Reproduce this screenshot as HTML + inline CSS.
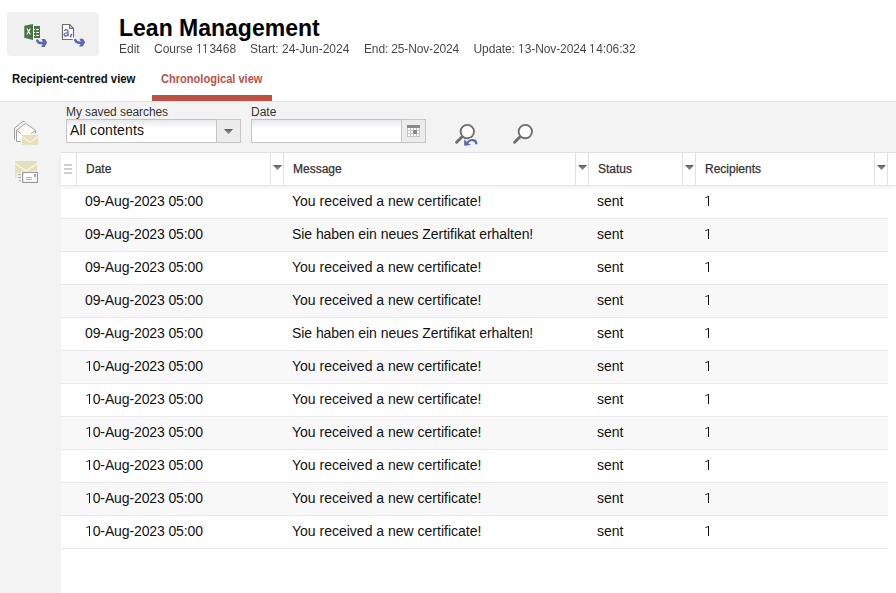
<!DOCTYPE html>
<html><head><meta charset="utf-8">
<style>
*{margin:0;padding:0;box-sizing:border-box}
html,body{width:896px;height:593px;overflow:hidden;background:#fff;font-family:"Liberation Sans",sans-serif;color:#222}
.abs{position:absolute}
#tools{left:7px;top:12px;width:92px;height:44px;background:#f0f0f0;border-radius:4px}
#title{left:119px;top:15px;font-size:23px;font-weight:bold;color:#000;white-space:nowrap;letter-spacing:0}
#meta{left:0;top:42px;width:700px;height:16px;font-size:12px;color:#1a1a1a;opacity:0.82;will-change:transform;white-space:nowrap}
.o12{position:relative;color:transparent}
.o12::before{content:"";position:absolute;left:var(--l);top:2px;width:1.15px;height:8.8px;background:#2a2a2a}
.o12::after{content:"";position:absolute;left:calc(var(--l) - 2.3px);top:2.3px;width:2.8px;height:1px;background:#2a2a2a;transform:rotate(-22deg);transform-origin:100% 0}
#meta span{position:absolute;top:0}
.tab{top:72px;font-size:12px;transform-origin:0 0;font-weight:bold;white-space:nowrap}
#tab1{left:12px;color:#111;transform:scaleX(0.944)}
#tab2{left:161px;transform:scaleX(0.922);color:#bf5049}
#tabbar{left:152px;top:95px;width:120px;height:6px;background:#bd5045}
#gray{left:0;top:101px;width:896px;height:492px;background:#f3f3f3;border-top:1px solid #e2e2e2}
.lbl{font-size:12px;color:#333;top:105px;white-space:nowrap}
.inp{top:119px;height:24px;border:1px solid #c6c6c6;border-top-color:#c1c2c6;background:linear-gradient(#e6e7eb,#fff 8px)}
.btn{top:119px;height:24px;border:1px solid #c6c6c6;background:#ececec}
#grid{left:61px;top:152px;width:835px;height:441px;background:#fff}
#ghead{left:0;top:0;width:835px;height:34px;border-top:1px solid #e0e0e0;border-bottom:1px solid #e8e8e8;box-shadow:0 2px 4px rgba(0,0,0,0.06);background:#fff}
.sep{top:0;width:1px;height:32px;background:#e2e2e2}
.tri{width:0;height:0;border-left:4.5px solid transparent;border-right:4.5px solid transparent;border-top:5px solid #777}
.hd{top:9px;font-size:12px;color:#333;-webkit-text-stroke:0.25px #333;white-space:nowrap}
.row{left:0;width:827px;height:33px;border-bottom:1px solid #e9e9e9;font-size:14px;color:#111;white-space:nowrap}
.row.alt{background:#f8f8f8}
.row span{position:absolute;top:7px}
.one{position:relative;color:transparent}
.one::before{content:"";position:absolute;left:3.8px;top:3px;width:1.5px;height:10px;background:#111}
.one::after{content:"";position:absolute;left:0.8px;top:3.3px;width:3.4px;height:1.3px;background:#111;transform:rotate(-20deg);transform-origin:100% 0}
</style></head><body>
<svg width="0" height="0" style="position:absolute"><defs><linearGradient id="tg" x1="0" y1="0" x2="0" y2="1"><stop offset="0" stop-color="#5a5a5a"/><stop offset="1" stop-color="#a0a0a0"/></linearGradient></defs></svg>

<div id="tools" class="abs"></div>
<!-- excel icon -->
<svg class="abs" style="left:22px;top:22px" width="28" height="28" viewBox="0 0 28 28">
  <path d="M2.3 3.8 L11 2 L11 18 L2.3 15.7 Z" fill="#4a7646"/>
  <rect x="12" y="4" width="6" height="12" fill="#4a7646"/>
  <path d="M4.9 6.6 L8.3 12.6 M8.3 6.6 L4.9 12.6" stroke="#fff" stroke-width="1.1"/>
  <g fill="#fff"><rect x="14.2" y="6.9" width="2.8" height="1.1"/><rect x="14.2" y="9.9" width="2.8" height="1.1"/><rect x="14.2" y="12.9" width="2.8" height="1.1"/>
  <rect x="12.2" y="6.9" width="0.9" height="1.1"/><rect x="12.2" y="9.9" width="0.9" height="1.1"/><rect x="12.2" y="12.9" width="0.9" height="1.1"/></g>
  <g transform="translate(14.2 17.2)"><path d="M1.1 1.2 C1.5 3.3 3.2 3.8 5.5 3.8 L8.5 3.8" stroke="#5a67b2" stroke-width="2.5" stroke-linecap="round" fill="none"/><path d="M5.2 -0.1 L8.8 -0.1 L10.9 3.4 L8.5 7.7 L4.9 7.7 L7.2 3.6 Z" fill="#5a67b2"/></g>
</svg>
<!-- text icon -->
<svg class="abs" style="left:60px;top:22px" width="28" height="28" viewBox="0 0 28 28">
  <path d="M2.5 2.5 L9.6 2.5 L13.5 6.4 L13.5 17.5 L2.5 17.5 Z" fill="#fff"/>
  <path d="M13.5 15.5 L13.5 6.4 L9.6 2.5 L2.5 2.5 L2.5 17.5 L12.8 17.5" fill="none" stroke="#6e6e6e" stroke-width="1.2"/>
  <path d="M9.6 2.5 L9.6 6.4 L13.5 6.4" fill="none" stroke="#6e6e6e" stroke-width="1.1"/>
  <path d="M4.3 8.7 Q5.5 7.5 6.7 7.6 Q8.0 7.8 8.0 9.4 L8.0 14.2" stroke="#5a67b2" stroke-width="1.3" fill="none"/>
  <path d="M8.0 10.9 Q4.1 10.7 4.1 12.6 Q4.2 14.1 5.8 14.0 Q7.4 13.9 8.0 12.5" stroke="#5a67b2" stroke-width="1.3" fill="none"/>
  <path d="M11.6 11.8 L10.4 15.2" stroke="#5a67b2" stroke-width="1.5"/>
  <g transform="translate(14.2 16.9)"><path d="M1.1 1.2 C1.5 3.3 3.2 3.8 5.5 3.8 L8.5 3.8" stroke="#5a67b2" stroke-width="2.5" stroke-linecap="round" fill="none"/><path d="M5.2 -0.1 L8.8 -0.1 L10.9 3.4 L8.5 7.7 L4.9 7.7 L7.2 3.6 Z" fill="#5a67b2"/></g>
</svg>

<div id="title" class="abs">Lean Management</div>
<div id="meta" class="abs">
  <span style="left:119px">Edit</span>
  <span style="left:154px">Course <span class="o12" style="position:relative;--l:2.95px">1</span><span class="o12" style="position:relative;--l:2.1px">1</span>3468</span>
  <span style="left:250px">Start: 24-Jun-2024</span>
  <span style="left:364px;letter-spacing:-0.15px">End: 25-Nov-2024</span>
  <span style="left:473.5px;letter-spacing:-0.1px">Update: <span class="o12" style="position:relative;--l:2.9px">1</span>3-Nov-2024 <span class="o12" style="position:relative;--l:2.2px">1</span>4:06:32</span>
</div>
<div id="tab1" class="abs tab">Recipient-centred view</div>
<div id="tab2" class="abs tab">Chronological view</div>
<div id="gray" class="abs"></div>
<div id="tabbar" class="abs"></div>

<!-- sidebar icons -->
<svg class="abs" style="left:10px;top:118px" width="32" height="30" viewBox="0 0 32 30">
  <path d="M4.5 21.7 L4.5 10.1 L12.7 3.5 L14.6 3.5" stroke="#a2a2a2" stroke-width="1" fill="none"/>
  <path d="M6.5 23.5 L6.5 12.3 L15.6 5.3 L25.5 12.3 L25.5 23.5 Z" fill="#fafafa"/>
  <path d="M6.5 23.5 L6.5 12.3 L15.6 5.3 L25.5 12.3 L25.5 15.5" stroke="#a2a2a2" stroke-width="1" fill="none"/>
  <path d="M6.5 23.5 L10.8 23.5 M6.5 12.3 L10.8 15.5 M25.5 12.3 L21.3 15.5" stroke="#a2a2a2" stroke-width="1" fill="none"/>
  <rect x="11.9" y="16.9" width="16.2" height="10" fill="#e5dfbb"/>
  <path d="M11.9 18.6 L20 24.3 L28.1 18.6" stroke="#f7f5ec" stroke-width="1.2" fill="none"/>
</svg>
<svg class="abs" style="left:10px;top:158px" width="32" height="30" viewBox="0 0 32 30">
  <rect x="5.1" y="3" width="21.9" height="16.9" fill="#e5dfbb"/>
  <path d="M5.1 5.6 L16.2 12.8 L27 5.6" stroke="#f7f5ec" stroke-width="1.3" fill="none"/>
  <rect x="6.5" y="15" width="6" height="10" fill="#f3f3f3"/>
  <rect x="11" y="13" width="18.2" height="13.2" fill="#fff"/>
  <rect x="12.6" y="14.4" width="14.9" height="10.1" fill="#fff" stroke="#9a9a9a" stroke-width="1.3"/>
  <rect x="24" y="16.1" width="1.9" height="2.7" fill="#8e97cb"/>
  <path d="M15.9 19.5 L22.1 19.5 M15.9 21.5 L22.1 21.5" stroke="#b0b0b0" stroke-width="1"/>
  <path d="M7.8 16.6 L11 16.6 M8.2 19.6 L11 19.6 M8.7 22.8 L11 22.8" stroke="#a0a0a0" stroke-width="1"/>
</svg>

<!-- filters -->
<div class="abs lbl" style="left:66px;letter-spacing:-0.08px">My saved searches</div>
<div class="abs lbl" style="left:251px">Date</div>
<div class="abs inp" style="left:66px;width:151px"></div>
<div class="abs" style="left:70px;top:122px;font-size:14px;color:#111;letter-spacing:0.14px">All contents</div>
<div class="abs btn" style="left:216px;width:25px"></div>
<svg class="abs" style="left:224px;top:129px" width="10" height="6" viewBox="0 0 10 6"><path d="M0 0 H9 L4.5 5.2 Z" fill="url(#tg)"/></svg>
<div class="abs inp" style="left:251px;width:151px"></div>
<div class="abs btn" style="left:401px;width:25px"></div>
<svg class="abs" style="left:407px;top:125px" width="13" height="12" viewBox="0 0 13 12" shape-rendering="crispEdges">
  <rect x="0" y="0" width="13" height="12" fill="#c4c4c4"/>
  <g fill="#fff"><rect x="1" y="3" width="2" height="2"/><rect x="4" y="3" width="2" height="2"/><rect x="7" y="3" width="2" height="2"/><rect x="10" y="3" width="2" height="2"/><rect x="1" y="6" width="2" height="2"/><rect x="4" y="6" width="2" height="2"/><rect x="7" y="6" width="2" height="2"/><rect x="10" y="6" width="2" height="2"/><rect x="1" y="9" width="2" height="2"/><rect x="4" y="9" width="2" height="2"/><rect x="7" y="9" width="2" height="2"/><rect x="10" y="9" width="2" height="2"/></g>
  <rect x="0" y="0" width="13" height="3" fill="#8a8a8a"/>
  <rect x="6" y="5" width="4" height="4" fill="#8a8a8a"/>
</svg>
<!-- search icons -->
<svg class="abs" style="left:452px;top:121px" width="28" height="28" viewBox="0 0 28 28">
  <path d="M10.6 15.2 L4.6 21.2" stroke="#6e6e6e" stroke-width="3" stroke-linecap="round"/>
  <circle cx="15.3" cy="10.6" r="6.7" fill="#fff" stroke="#6e6e6e" stroke-width="1.9"/>
  <path d="M24.4 23.2 C24.3 18.4 18.3 17.6 15.2 21.8" stroke="#f3f3f3" stroke-width="4" fill="none"/>
  <path d="M24.4 23.2 C24.3 18.4 18.3 17.6 15.2 21.8" stroke="#5a67b2" stroke-width="2.1" fill="none"/>
  <path d="M12.2 18.3 L12.2 24.8 L18.9 24.1 Q15.6 22.4 12.2 18.3 Z" fill="#5a67b2"/>
</svg>
<svg class="abs" style="left:510px;top:121px" width="28" height="28" viewBox="0 0 28 28">
  <path d="M10.6 15.2 L4.6 21.2" stroke="#6e6e6e" stroke-width="3" stroke-linecap="round"/>
  <circle cx="15.3" cy="10.6" r="6.7" fill="#fff" stroke="#6e6e6e" stroke-width="1.9"/>
</svg>

<!-- grid -->
<div id="grid" class="abs">
  <div id="ghead" class="abs">
    <svg class="abs" style="left:3px;top:11px" width="8" height="10"><rect x="0" y="0" width="8" height="2" fill="#d0d0d0"/><rect x="0" y="4" width="8" height="2" fill="#d0d0d0"/><rect x="0" y="8" width="8" height="2" fill="#d0d0d0"/></svg>
    <div class="abs sep" style="left:15px"></div>
    <div class="abs hd" style="left:25px">Date</div>
    <svg class="abs" style="left:212px;top:12px" width="10" height="6" viewBox="0 0 10 6"><path d="M0 0 H9 L4.5 5.2 Z" fill="url(#tg)"/></svg>
    <div class="abs sep" style="left:209px"></div>
    <div class="abs sep" style="left:222px"></div>
    <div class="abs hd" style="left:232px">Message</div>
    <svg class="abs" style="left:517px;top:12px" width="10" height="6" viewBox="0 0 10 6"><path d="M0 0 H9 L4.5 5.2 Z" fill="url(#tg)"/></svg>
    <div class="abs sep" style="left:514px"></div>
    <div class="abs sep" style="left:527px"></div>
    <div class="abs hd" style="left:537px">Status</div>
    <svg class="abs" style="left:624px;top:12px" width="10" height="6" viewBox="0 0 10 6"><path d="M0 0 H9 L4.5 5.2 Z" fill="url(#tg)"/></svg>
    <div class="abs sep" style="left:621px"></div>
    <div class="abs sep" style="left:634px"></div>
    <div class="abs hd" style="left:644px">Recipients</div>
    <svg class="abs" style="left:816px;top:12px" width="10" height="6" viewBox="0 0 10 6"><path d="M0 0 H9 L4.5 5.2 Z" fill="url(#tg)"/></svg>
    <div class="abs sep" style="left:813px"></div>
    <div class="abs sep" style="left:826px"></div>
  </div>
  <div class="abs" style="left:0;top:34px;width:835px">
    <div class="abs row" style="top:0"><span style="left:24px;letter-spacing:-0.12px">09-Aug-2023 05:00</span><span style="left:231px">You received a new certificate!</span><span style="left:536px">sent</span><span style="left:643px"><span class="one" style="position:relative;top:0">1</span></span></div>
    <div class="abs row alt" style="top:33px"><span style="left:24px;letter-spacing:-0.12px">09-Aug-2023 05:00</span><span style="left:231px;letter-spacing:-0.06px">Sie haben ein neues Zertifikat erhalten!</span><span style="left:536px">sent</span><span style="left:643px"><span class="one" style="position:relative;top:0">1</span></span></div>
    <div class="abs row" style="top:66px"><span style="left:24px;letter-spacing:-0.12px">09-Aug-2023 05:00</span><span style="left:231px">You received a new certificate!</span><span style="left:536px">sent</span><span style="left:643px"><span class="one" style="position:relative;top:0">1</span></span></div>
    <div class="abs row alt" style="top:99px"><span style="left:24px;letter-spacing:-0.12px">09-Aug-2023 05:00</span><span style="left:231px">You received a new certificate!</span><span style="left:536px">sent</span><span style="left:643px"><span class="one" style="position:relative;top:0">1</span></span></div>
    <div class="abs row" style="top:132px"><span style="left:24px;letter-spacing:-0.12px">09-Aug-2023 05:00</span><span style="left:231px;letter-spacing:-0.06px">Sie haben ein neues Zertifikat erhalten!</span><span style="left:536px">sent</span><span style="left:643px"><span class="one" style="position:relative;top:0">1</span></span></div>
    <div class="abs row alt" style="top:165px"><span style="left:24px;letter-spacing:-0.12px"><span class="one" style="position:relative;top:0">1</span>0-Aug-2023 05:00</span><span style="left:231px">You received a new certificate!</span><span style="left:536px">sent</span><span style="left:643px"><span class="one" style="position:relative;top:0">1</span></span></div>
    <div class="abs row" style="top:198px"><span style="left:24px;letter-spacing:-0.12px"><span class="one" style="position:relative;top:0">1</span>0-Aug-2023 05:00</span><span style="left:231px">You received a new certificate!</span><span style="left:536px">sent</span><span style="left:643px"><span class="one" style="position:relative;top:0">1</span></span></div>
    <div class="abs row alt" style="top:231px"><span style="left:24px;letter-spacing:-0.12px"><span class="one" style="position:relative;top:0">1</span>0-Aug-2023 05:00</span><span style="left:231px">You received a new certificate!</span><span style="left:536px">sent</span><span style="left:643px"><span class="one" style="position:relative;top:0">1</span></span></div>
    <div class="abs row" style="top:264px"><span style="left:24px;letter-spacing:-0.12px"><span class="one" style="position:relative;top:0">1</span>0-Aug-2023 05:00</span><span style="left:231px">You received a new certificate!</span><span style="left:536px">sent</span><span style="left:643px"><span class="one" style="position:relative;top:0">1</span></span></div>
    <div class="abs row alt" style="top:297px"><span style="left:24px;letter-spacing:-0.12px"><span class="one" style="position:relative;top:0">1</span>0-Aug-2023 05:00</span><span style="left:231px">You received a new certificate!</span><span style="left:536px">sent</span><span style="left:643px"><span class="one" style="position:relative;top:0">1</span></span></div>
    <div class="abs row" style="top:330px"><span style="left:24px;letter-spacing:-0.12px"><span class="one" style="position:relative;top:0">1</span>0-Aug-2023 05:00</span><span style="left:231px">You received a new certificate!</span><span style="left:536px">sent</span><span style="left:643px"><span class="one" style="position:relative;top:0">1</span></span></div>
  </div>
</div>
</body></html>
